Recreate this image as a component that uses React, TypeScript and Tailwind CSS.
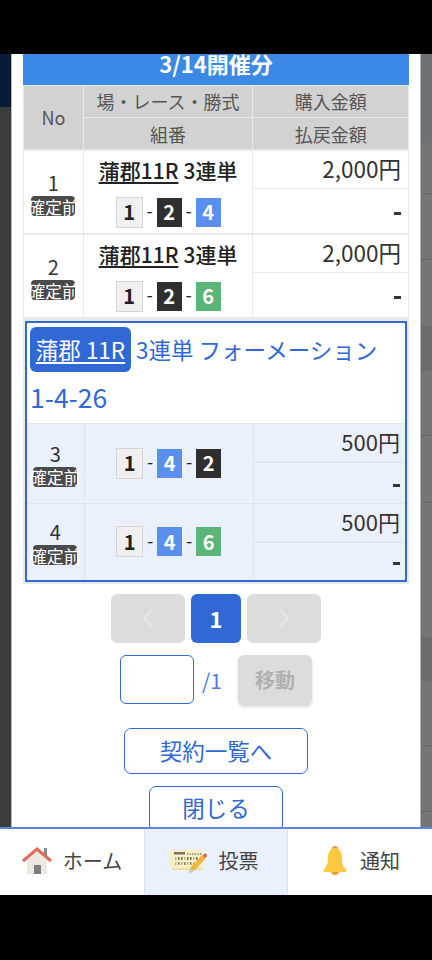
import React from "react";

const FONT = { fontFamily: '"Noto Sans CJK JP", "Noto Sans", sans-serif' };

function Num({ n, kind }: { n: string; kind: "w" | "k" | "b" | "g" }) {
  const cls =
    kind === "w"
      ? "w-[27px] h-[31px] bg-[#f0f0f0] border border-[#d6d6d6] text-[#222]"
      : kind === "k"
      ? "w-[25px] h-[29px] bg-[#2f2f2f] text-white"
      : kind === "b"
      ? "w-[25px] h-[29px] bg-[#5b8fef] text-white"
      : "w-[25px] h-[29px] bg-[#5cb578] text-white";
  return <span className={`flex items-center justify-center text-[20px] font-bold leading-none ${cls}`}>{n}</span>;
}

function Combo({ c }: { c: [string, "w" | "k" | "b" | "g"][] }) {
  return (
    <div className="flex items-center justify-center">
      <Num n={c[0][0]} kind={c[0][1]} />
      <span className="w-[14px] text-center text-[18px] leading-none text-[#222] -translate-y-[2px]">-</span>
      <Num n={c[1][0]} kind={c[1][1]} />
      <span className="w-[14px] text-center text-[18px] leading-none text-[#222] -translate-y-[2px]">-</span>
      <Num n={c[2][0]} kind={c[2][1]} />
    </div>
  );
}

function NoCell({ n, bg, pad }: { n: string; bg: string; pad: string }) {
  return (
    <div className={`row-span-2 flex flex-col items-center justify-center ${bg} ${pad}`}>
      <span className="text-[20px] leading-[26px] text-[#333]">{n}</span>
      <span className="flex h-[20px] w-[44px] items-center justify-center rounded-[4px] bg-[#4a4a4a] text-[17px] leading-none text-white whitespace-nowrap">
        確定前
      </span>
    </div>
  );
}

function AmountCells({ amount, bg, pr, pb, size }: { amount: string; bg: string; pr: string; pb: string; size: string }) {
  return (
    <>
      <div className={`flex items-center justify-end leading-none text-[#333] ${size} ${pr} ${pb} ${bg}`}>{amount}</div>
      <div className={`flex items-center justify-end pt-[5px] ${pr} ${bg}`}>
        <span className="h-[3px] w-[7px] bg-[#333]" />
      </div>
    </>
  );
}

function MainRow({ n, combo }: { n: string; combo: [string, "w" | "k" | "b" | "g"][] }) {
  return (
    <div className="grid grid-cols-[58.8px_167.5px_154.7px] grid-rows-[37px_44px] gap-[1.5px]">
      <NoCell n={n} bg="bg-white" pad="pt-[3px]" />
      <div className="row-span-2 row-start-1 col-start-2 flex flex-col items-center bg-white pt-[5px]">
        <div className="flex h-[30px] items-center text-[21px] font-medium leading-none text-[#222] whitespace-nowrap">
          <span className="underline underline-offset-[3px]">蒲郡11R</span>
          <span className="ml-[5px]">3連単</span>
        </div>
        <div className="mt-[11px]">
          <Combo c={combo} />
        </div>
      </div>
      <AmountCells amount="2,000円" bg="bg-white" pr="pr-[7px]" pb="pb-[2px]" size="text-[22.5px]" />
    </div>
  );
}

function SubRow({ n, combo, rows }: { n: string; combo: [string, "w" | "k" | "b" | "g"][]; rows: string }) {
  return (
    <div className={`grid grid-cols-[56.6px_168px_151.4px] gap-[1px] ${rows}`}>
      <NoCell n={n} bg="bg-[#ebf1fc]" pad="pt-[1px]" />
      <div className="row-span-2 row-start-1 col-start-2 flex items-center justify-center bg-[#ebf1fc]">
        <Combo c={combo} />
      </div>
      <AmountCells amount="500円" bg="bg-[#ebf1fc]" pr="pr-[5px]" pb="pb-[4px]" size="text-[22px]" />
    </div>
  );
}

function Chevron({ dir }: { dir: "l" | "r" }) {
  return (
    <svg width="14" height="20" viewBox="0 0 14 20" fill="none" stroke="#e9e9e9" strokeWidth="1.6">
      <path d={dir === "l" ? "M11 2 L3 10 L11 18" : "M3 2 L11 10 L3 18"} />
    </svg>
  );
}

function HouseIcon() {
  return (
    <svg width="30" height="28" viewBox="0 0 30 28">
      <rect x="22" y="1" width="3" height="9" fill="#8a8a8a" />
      <path d="M5 13 L15 4 L25 13 V27 H5 Z" fill="#ece8e1" />
      <rect x="12" y="18" width="7" height="9" fill="#7d7d7d" />
      <path d="M1 14 L15 2 L29 14" fill="none" stroke="#df6a5c" strokeWidth="3" />
    </svg>
  );
}

function TicketIcon() {
  return (
    <svg width="38" height="28" viewBox="0 0 38 28">
      <rect x="2" y="5" width="31" height="18" rx="1" fill="#e8dfae" />
      <rect x="0" y="3" width="33" height="18" rx="1" fill="#f9f0c2" />
      <rect x="4" y="5" width="11" height="2.5" fill="#77736a" />
      {[0, 1, 2, 3, 4, 5].map((i) => (
        <rect key={`a${i}`} x={17 + i * 2.6} y="6" width="1.3" height="2" fill="#9a9484" />
      ))}
      {[0, 1, 2, 3, 4, 5, 6, 7].map((i) => (
        <rect key={`b${i}`} x={5 + i * 3} y="10" width="1.5" height="3" fill={i % 3 === 0 ? "#bdb696" : "#6f6b5d"} />
      ))}
      {[0, 1, 2, 3, 4, 5, 6, 7].map((i) => (
        <rect key={`c${i}`} x={5 + i * 3} y="15" width="1.5" height="3" fill={i % 2 === 0 ? "#bdb696" : "#8a8574"} />
      ))}
      <path d="M32 8 L36 11 L24 24 L20 21 Z" fill="#edb73f" />
      <path d="M20 21 L24 24 L19 27 Z" fill="#cfc6a8" />
      <circle cx="35" cy="8.5" r="2" fill="#e2625a" />
    </svg>
  );
}

function BellIcon() {
  return (
    <svg width="24" height="30" viewBox="0 0 24 30">
      <path d="M9 3 A3 3 0 0 1 15 3 L15 5 H9 Z" fill="#e8913a" />
      <path d="M8 25 H16 A4 4 0 0 1 8 25 Z" fill="#ef9d35" />
      <path d="M12 2 C6 2 5 8 5 13 C5 19 3 21 0.5 24 Q0 26 2 26 H22 Q24 26 23.5 24 C21 21 19 19 19 13 C19 8 18 2 12 2 Z" fill="#fbc93f" />
    </svg>
  );
}

function SideStripe({ h, cls }: { h: string; cls: string }) {
  return <div className={`shrink-0 ${h} ${cls}`} />;
}

export default function App() {
  return (
    <div className="flex h-[960px] w-[432px] flex-col overflow-hidden bg-black" style={FONT}>
      <div className="h-[54px] shrink-0 bg-black" />
      <div className="flex h-[773px] shrink-0 overflow-hidden">
        {/* left backdrop */}
        <div className="flex w-[11px] shrink-0 flex-col bg-[#3c3c3c]">
          <SideStripe h="h-[53px]" cls="bg-[#0a1b3a]" />
        </div>

        {/* modal */}
        <div className="w-[410px] shrink-0 overflow-hidden border-x border-[#b5b5b5] bg-white px-[11px]">
          <div className="flex h-[31px] items-center justify-center bg-[#3b88e5] pb-[13px] text-[22px] font-bold leading-none text-white">
            <span className="h-[22px] shrink-0">3/14開催分</span>
          </div>

          <div className="bg-[#e9e9e9] px-[1px] pb-[2px]">
            {/* head */}
            <div className="grid grid-cols-[58.8px_167.5px_154.7px] grid-rows-[31px_31px] gap-[1.5px] pt-[.5px] text-[18px] leading-none text-[#555]">
              <div className="row-span-2 flex items-center justify-center bg-[#d2d2d2]">No</div>
              <div className="flex items-center justify-center bg-[#d2d2d2]">場・レース・勝式</div>
              <div className="flex items-center justify-center bg-[#d2d2d2]">購入金額</div>
              <div className="flex items-center justify-center bg-[#d2d2d2]">組番</div>
              <div className="flex items-center justify-center bg-[#d2d2d2]">払戻金額</div>
            </div>
            <div className="mt-[1.5px]">
              <MainRow
                n="1"
                combo={[
                  ["1", "w"],
                  ["2", "k"],
                  ["4", "b"],
                ]}
              />
            </div>
            <div className="mt-[1.5px]">
              <MainRow
                n="2"
                combo={[
                  ["1", "w"],
                  ["2", "k"],
                  ["6", "g"],
                ]}
              />
            </div>

            {/* formation group */}
            <div className="mx-[1px] mt-[3.5px] border-2 border-[#3068d6] bg-[#e4e4e4]">
              <div className="h-[100px] bg-white pl-[3px] pt-[4px] text-[#3068d6]">
                <div className="flex h-[45px] items-center whitespace-nowrap text-[22.5px] leading-none">
                  <span className="flex h-[45px] w-[101px] items-center justify-center rounded-[6px] bg-[#3068d6] text-white underline underline-offset-[3px]">
                    蒲郡 11R
                  </span>
                  <span className="ml-[5px]">3連単 フォーメーション</span>
                </div>
                <div className="mt-[9px] text-[26.5px] leading-[32px]">1-4-26</div>
              </div>
              <div className="mt-[1px]">
                <SubRow
                  n="3"
                  rows="grid-rows-[38px_40px]"
                  combo={[
                    ["1", "w"],
                    ["4", "b"],
                    ["2", "k"],
                  ]}
                />
              </div>
              <div className="mt-[1px]">
                <SubRow
                  n="4"
                  rows="grid-rows-[38px_37px]"
                  combo={[
                    ["1", "w"],
                    ["4", "b"],
                    ["6", "g"],
                  ]}
                />
              </div>
            </div>
          </div>

          {/* pagination */}
          <div className="mt-[10px] flex justify-center gap-[6px]">
            <div className="flex h-[49px] w-[74px] items-center justify-center rounded-[6px] bg-[#dcdcdc]">
              <Chevron dir="l" />
            </div>
            <div className="flex h-[49px] w-[50px] items-center justify-center rounded-[6px] bg-[#3068d6] text-[22px] font-bold leading-none text-white">
              1
            </div>
            <div className="flex h-[49px] w-[74px] items-center justify-center rounded-[6px] bg-[#dcdcdc]">
              <Chevron dir="r" />
            </div>
          </div>

          <div className="mt-[12px] flex h-[50px] items-start justify-center">
            <div className="h-[49px] w-[74px] rounded-[6px] border border-[#3068d6] bg-white" />
            <span className="ml-[8px] mr-[17px] flex h-[52px] w-[19px] items-center text-[21px] leading-none text-[#4a7bdc]">/1</span>
            <div className="flex h-[50px] w-[74px] items-center justify-center rounded-[6px] bg-[#dcdcdc] text-[20px] font-bold leading-none text-[#b0b0b0] shadow-[0_2px_3px_rgba(0,0,0,0.15)]">
              移動
            </div>
          </div>

          <div className="mt-[23px] flex justify-center">
            <div className="flex h-[46px] w-[184px] items-center justify-center rounded-[7px] border border-[#3068d6] text-[22.5px] leading-none text-[#3068d6]">
              契約一覧へ
            </div>
          </div>
          <div className="mt-[12px] flex justify-center">
            <div className="flex h-[46px] w-[134px] items-center justify-center rounded-[7px] border border-[#3068d6] pb-[3px] text-[22.5px] leading-none text-[#3068d6]">
              閉じる
            </div>
          </div>
        </div>

        {/* right backdrop */}
        <div className="flex w-[11px] shrink-0 flex-col bg-[#757575]">
          <SideStripe h="h-[89px]" cls="bg-[#6f7275]" />
          <SideStripe h="h-[51px]" cls="border-b border-[#666]" />
          <SideStripe h="h-[66px]" cls="border-b border-[#666]" />
          <SideStripe h="h-[66px]" cls="" />
          <SideStripe h="h-[45px]" cls="bg-[#6c6c6c]" />
          <SideStripe h="h-[65px]" cls="border-b border-[#666]" />
          <SideStripe h="h-[67px]" cls="border-b border-[#666]" />
          <SideStripe h="h-[67px]" cls="" />
          <SideStripe h="h-[67px]" cls="" />
          <SideStripe h="h-[44px]" cls="bg-[#6c6c6c]" />
          <SideStripe h="h-[65px]" cls="border-b border-[#666]" />
          <SideStripe h="h-[66px]" cls="border-b border-[#666]" />
        </div>
      </div>

      {/* bottom nav */}
      <div className="grid h-[68px] shrink-0 grid-cols-[144px_144px_144px] border-t-2 border-[#5a88e0] bg-white text-[20px] leading-none text-[#444]">
        <div className="flex items-center justify-center gap-[11px] pb-[2px]">
          <HouseIcon />
          <span>ホーム</span>
        </div>
        <div className="flex items-center justify-center gap-[11px] border-x border-[#e0e4ea] bg-[#ebf1fc] pb-[2px] pr-[4px]">
          <TicketIcon />
          <span>投票</span>
        </div>
        <div className="flex items-center justify-center gap-[13px] pb-[2px] pl-[3px]">
          <BellIcon />
          <span>通知</span>
        </div>
      </div>
      <div className="flex-1 bg-black" />
    </div>
  );
}
